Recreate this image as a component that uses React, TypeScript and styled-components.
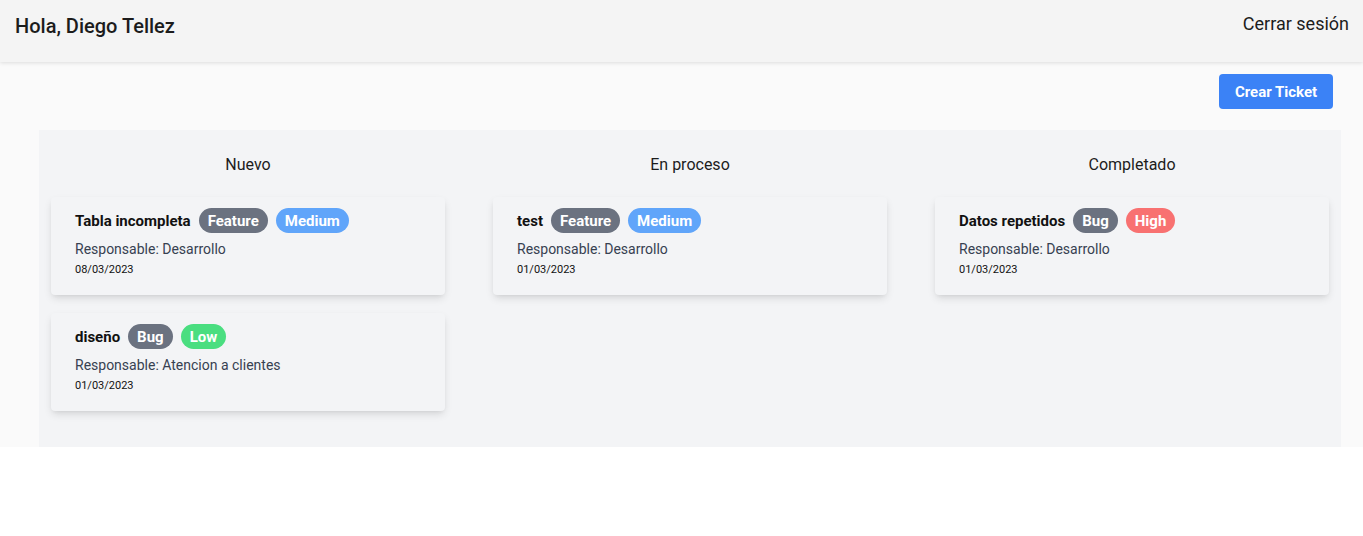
import styled, { createGlobalStyle } from 'styled-components';

const GlobalStyle = createGlobalStyle`
  body {
    margin: 0;
    background: #ffffff;
    font-family: Roboto, "Liberation Sans", Arial, sans-serif;
    color: #1f1f1f;
  }
  * { box-sizing: border-box; }
`;

const Header = styled.header`
  display: flex;
  justify-content: space-between;
  align-items: flex-start;
  height: 62px;
  padding: 13px 14px 0 15px;
  background: #f4f4f4;
  box-shadow: 0 1px 4px rgba(0, 0, 0, 0.12);
  position: relative;
  z-index: 1;

  h1 {
    margin: 0;
    font-size: 20px;
    font-weight: 500;
    line-height: 26px;
    color: #1c1c1c;
  }
`;

const Logout = styled.button`
  border: none;
  background: none;
  padding: 0;
  font-family: inherit;
  font-size: 18px;
  line-height: 22px;
  color: #1c1c1c;
  cursor: pointer;
`;

const Main = styled.main`
  background: #fafafa;
  padding-top: 12px;
`;

const Toolbar = styled.div`
  display: flex;
  justify-content: flex-end;
  padding-right: 30px;
  margin-bottom: 21px;
`;

const CreateButton = styled.button`
  height: 35px;
  width: 114px;
  border: none;
  border-radius: 4px;
  background: #3b82f6;
  color: #fff;
  font-family: inherit;
  font-size: 15px;
  font-weight: 700;
`;

const Board = styled.section`
  display: grid;
  grid-template-columns: repeat(3, 394px);
  column-gap: 48px;
  margin: 0 22px 0 39px;
  padding: 23px 12px 18px;
  background: #f3f4f6;
`;

const Column = styled.div`
  display: flex;
  flex-direction: column;

  h2 {
    margin: 0 0 20px;
    font-size: 16px;
    font-weight: 400;
    line-height: 24px;
    text-align: center;
    color: #1c1c1c;
  }
`;

const Card = styled.article`
  background: #f3f4f6;
  border-radius: 4px;
  box-shadow: 0 4px 8px -1px rgba(0, 0, 0, 0.12), 0 2px 4px -2px rgba(0, 0, 0, 0.08);
  padding: 11px 24px 17px;
  margin-bottom: 18px;
`;

const TitleRow = styled.div`
  display: flex;
  align-items: center;
  gap: 8px;

  h3 {
    margin: 0;
    font-size: 15px;
    font-weight: 700;
    color: #111;
  }
`;

const Badge = styled.span<{ $bg: string }>`
  display: inline-flex;
  align-items: center;
  height: 25px;
  padding: 0 9px;
  border-radius: 999px;
  background: ${p => p.$bg};
  color: #fff;
  font-size: 15px;
  font-weight: 700;
`;

const Owner = styled.p`
  margin: 6px 0 0;
  font-size: 14px;
  line-height: 20px;
  color: #374151;
`;

const DateText = styled.p`
  margin: 3px 0 0;
  font-size: 11px;
  line-height: 16px;
  color: #111;
`;

type Ticket = {
  title: string;
  type: string;
  priority: 'Low' | 'Medium' | 'High';
  owner: string;
  date: string;
};

const priorityColor = { Low: '#4ade80', Medium: '#60a5fa', High: '#f87171' };

const columns: { name: string; tickets: Ticket[] }[] = [
  {
    name: 'Nuevo',
    tickets: [
      { title: 'Tabla incompleta', type: 'Feature', priority: 'Medium', owner: 'Desarrollo', date: '08/03/2023' },
      { title: 'diseño', type: 'Bug', priority: 'Low', owner: 'Atencion a clientes', date: '01/03/2023' },
    ],
  },
  {
    name: 'En proceso',
    tickets: [{ title: 'test', type: 'Feature', priority: 'Medium', owner: 'Desarrollo', date: '01/03/2023' }],
  },
  {
    name: 'Completado',
    tickets: [{ title: 'Datos repetidos', type: 'Bug', priority: 'High', owner: 'Desarrollo', date: '01/03/2023' }],
  },
];

const App = () => (
  <>
    <GlobalStyle />
    <Header>
      <h1>Hola, Diego Tellez</h1>
      <Logout>Cerrar sesión</Logout>
    </Header>
    <Main>
      <Toolbar>
        <CreateButton type="button">Crear Ticket</CreateButton>
      </Toolbar>
      <Board>
        {columns.map(col => (
          <Column key={col.name}>
            <h2>{col.name}</h2>
            {col.tickets.map(t => (
              <Card key={t.title}>
                <TitleRow>
                  <h3>{t.title}</h3>
                  <Badge $bg="#6b7280">{t.type}</Badge>
                  <Badge $bg={priorityColor[t.priority]}>{t.priority}</Badge>
                </TitleRow>
                <Owner>Responsable: {t.owner}</Owner>
                <DateText>{t.date}</DateText>
              </Card>
            ))}
          </Column>
        ))}
      </Board>
    </Main>
  </>
);

export default App;
